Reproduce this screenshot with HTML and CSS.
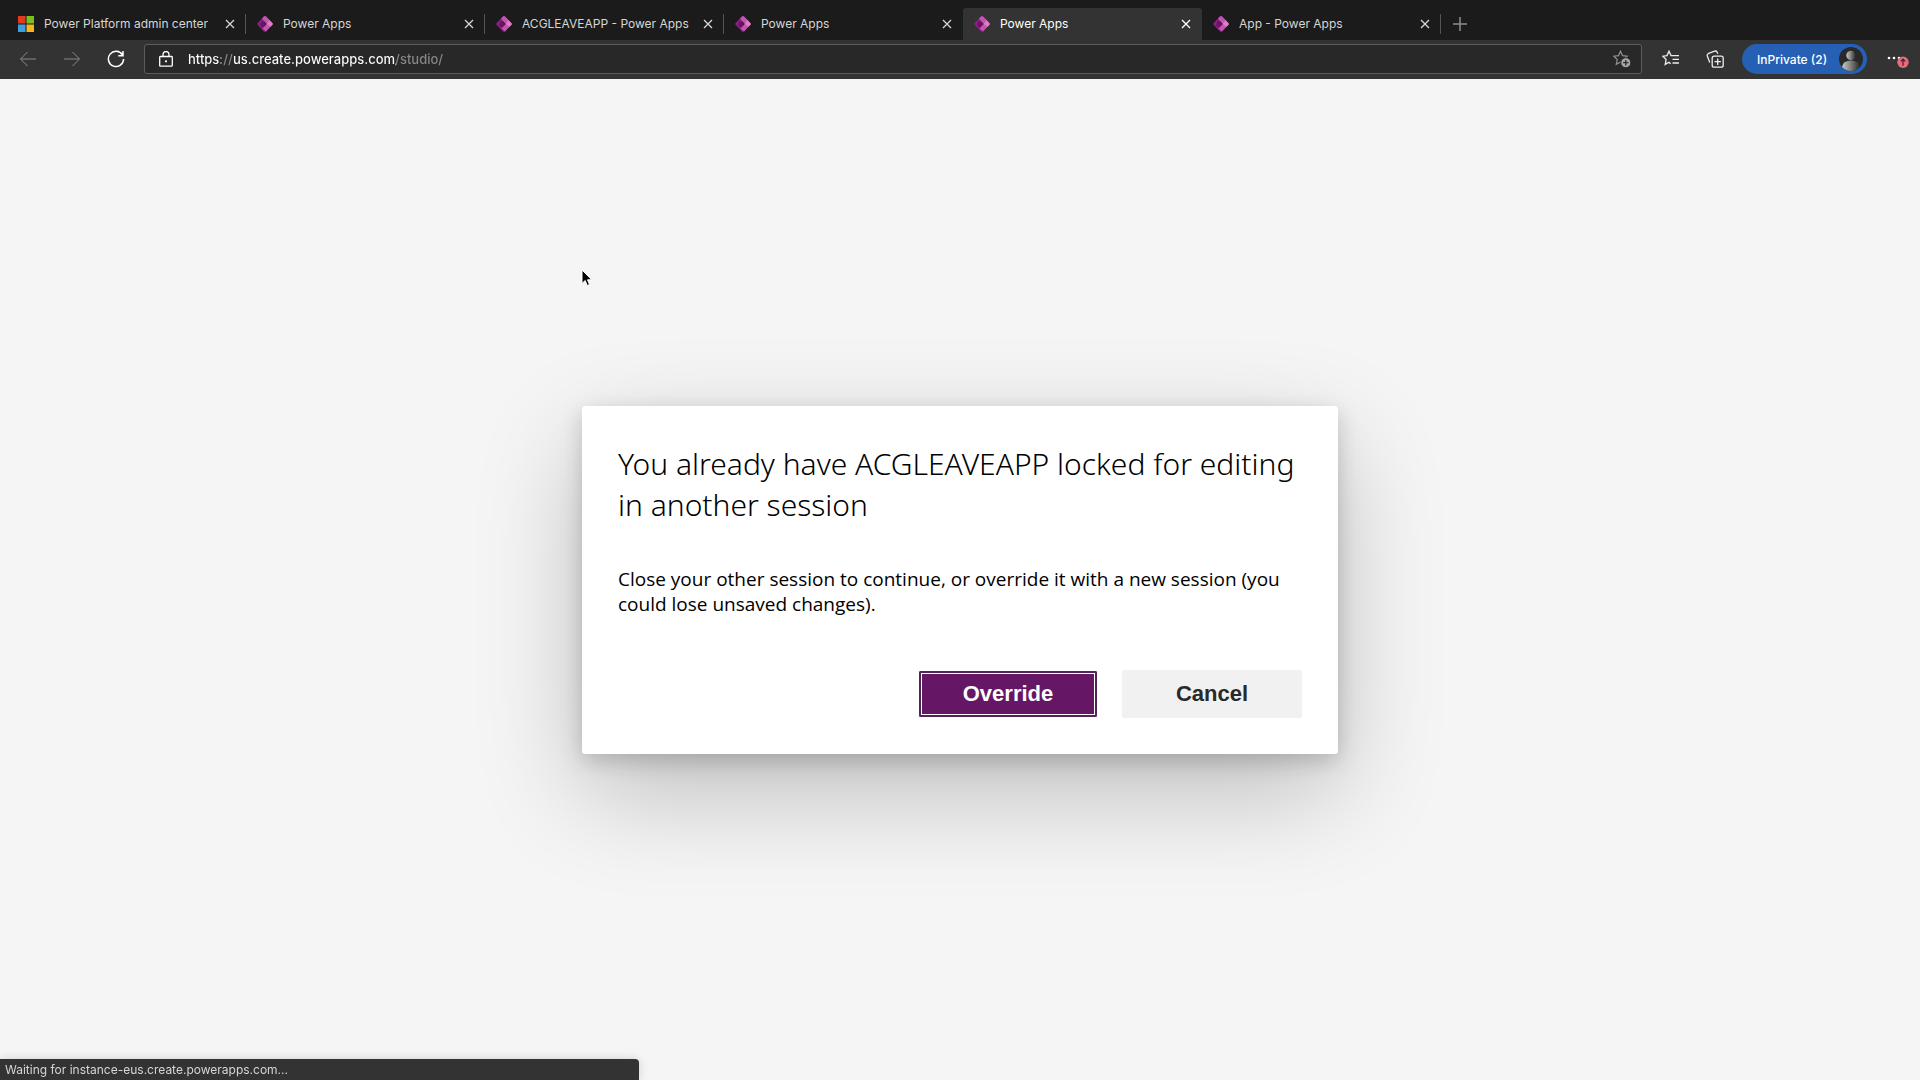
FILE: index.html
```html
<!DOCTYPE html>
<html lang="en">
<head>
<meta charset="utf-8">
<title>Power Apps</title>
<link rel="stylesheet" href="styles.css">
</head>
<body>
<svg class="defs" aria-hidden="true">
  <symbol id="powerapps" viewBox="0 0 16 16">
    <path d="M6.800 0.400 Q8 -0.400 9.200 0.400 L10.500 2 L5.500 8 L10.500 14 L9.200 15.600 Q8 16.400 6.800 15.600 L0.500 8.700 Q0 8 0.500 7.300Z" fill="#8a1f86"/>
    <path d="M5 2.500 L7 0.400 Q8 -0.400 9 0.400 L15.500 7.300 Q16 8 15.500 8.700 L9 15.600 L5.500 12.500 L9.700 8Z" fill="#c255ae"/>
    <path d="M9.500 1 L15.500 7.300 Q16 8 15.500 8.700 L13.500 10.800 L9.700 8 L12.300 4.500Z" fill="#e07cc7"/>
    <path d="M5 4.500 L9.200 8 L5.500 12 L3 9Z" fill="#701169"/>
  </symbol>
  <symbol id="close" viewBox="0 0 10 10">
    <path d="M1 1 9 9M9 1 1 9" stroke="currentColor" stroke-width="1.300" fill="none"/>
  </symbol>
</svg>

<header class="browser">
  <div class="tabs">
    <div class="tab">
      <svg class="tab-icon" viewBox="0 0 16 16"><path fill="#e5391f" d="M0 0h7.500v7.500H0z"/><path fill="#78c01a" d="M8.500 0H16v7.500H8.500z"/><path fill="#3d9fe0" d="M0 8.500h7.500V16H0z"/><path fill="#f5b81c" d="M8.500 8.500H16V16H8.500z"/></svg>
      <span class="tab-title">Power Platform admin center</span>
      <button class="tab-close" aria-label="Close tab"><svg><use href="#close"/></svg></button>
    </div>
    <div class="tab">
      <svg class="tab-icon"><use href="#powerapps"/></svg>
      <span class="tab-title">Power Apps</span>
      <button class="tab-close" aria-label="Close tab"><svg><use href="#close"/></svg></button>
    </div>
    <div class="tab">
      <svg class="tab-icon"><use href="#powerapps"/></svg>
      <span class="tab-title">ACGLEAVEAPP - Power Apps</span>
      <button class="tab-close" aria-label="Close tab"><svg><use href="#close"/></svg></button>
    </div>
    <div class="tab tab-before-active">
      <svg class="tab-icon"><use href="#powerapps"/></svg>
      <span class="tab-title">Power Apps</span>
      <button class="tab-close" aria-label="Close tab"><svg><use href="#close"/></svg></button>
    </div>
    <div class="tab tab-active">
      <svg class="tab-icon"><use href="#powerapps"/></svg>
      <span class="tab-title">Power Apps</span>
      <button class="tab-close" aria-label="Close tab"><svg><use href="#close"/></svg></button>
    </div>
    <div class="tab">
      <svg class="tab-icon"><use href="#powerapps"/></svg>
      <span class="tab-title">App - Power Apps</span>
      <button class="tab-close" aria-label="Close tab"><svg><use href="#close"/></svg></button>
    </div>
    <button class="new-tab" aria-label="New tab"><svg viewBox="0 0 14 14"><path d="M7 0v14M0 7h14" stroke="#8e8e8e" stroke-width="1.500"/></svg></button>
  </div>

  <div class="toolbar">
    <nav class="nav">
      <button class="nav-btn" aria-label="Back" disabled><svg viewBox="0 0 18 18"><path d="M17 9H2M8.500 2 1.500 9l7 7"/></svg></button>
      <button class="nav-btn" aria-label="Forward" disabled><svg viewBox="0 0 18 18"><path d="M1 9h15M9.500 2l7 7-7 7"/></svg></button>
      <button class="nav-btn nav-on" aria-label="Refresh"><svg viewBox="0 0 18 18"><path d="M15.500 5A7.600 7.600 0 1 0 16.600 9M16 1v4.700h-4.700"/></svg></button>
    </nav>
    <div class="address">
      <svg class="lock" viewBox="0 0 14 16"><path d="M1.500 5.500h11q.8 0 .8.800v8q0 .9-.8.900h-11q-.8 0-.8-.9v-8q0-.8.800-.8zM4 5.500V3.500a3 3 0 0 1 6 0v2" fill="none" stroke="#fff" stroke-width="1.300"/><circle cx="7" cy="10.300" r="1.100" fill="#fff"/></svg>
      <input class="url" type="text" aria-label="Address" value="https://us.create.powerapps.com/studio/">
      <button class="icon-btn" aria-label="Add to favorites"><svg class="star" viewBox="0 0 18 18"><path d="M7.500 1.200l2 4.400 4.700.6-3.500 3.300.9 4.800-4.100-2.400-4.200 2.400.9-4.800L.8 6.200l4.700-.6z" fill="none" stroke="#919191" stroke-width="1.200"/><circle cx="12.800" cy="12.700" r="5" fill="#a8a8a8" stroke="#292929"/><path d="M12.800 10v5.400M10.100 12.700h5.400" stroke="#292929" stroke-width="1.300"/></svg></button>
    </div>
    <div class="actions">
      <button class="icon-btn" aria-label="Favorites"><svg viewBox="0 0 18 18"><path d="M11 5.600H9L7 1.200 5 5.600.8 6.200l3.300 3.300-.9 4.900L7 12.200l1.700 1.500M10.500 5.600H17M10.500 9.300H17M10.500 13H17" fill="none" stroke="#ededed" stroke-width="1.300"/></svg></button>
      <button class="icon-btn" aria-label="Collections"><svg viewBox="0 0 18 18"><rect x="6.200" y="6.200" width="11" height="11" rx="2" fill="none" stroke="#ededed" stroke-width="1.300"/><path d="M11.700 8.500v6.400M8.500 11.700h6.400M3.800 12.500 1.300 6Q.8 4.500 2.200 3.700L8.500 1.200q1.800-.6 2.500.8l.8 1.700" fill="none" stroke="#ededed" stroke-width="1.300"/></svg></button>
      <button class="profile">InPrivate (2)
        <svg class="avatar" viewBox="0 0 24 24"><defs><linearGradient id="skin"><stop offset="0" stop-color="#c8c8c8"/><stop offset=".45" stop-color="#858585"/><stop offset="1" stop-color="#292929"/></linearGradient></defs><circle cx="12" cy="12" r="12" fill="#292929"/><circle cx="12" cy="8.500" r="4.700" fill="url(#skin)"/><path d="M3 20q1-6.500 9-6.500t9 6.500q-4 4-9 4t-9-4z" fill="url(#skin)"/></svg>
      </button>
      <button class="more" aria-label="Settings and more, update available"><svg viewBox="0 0 22 18"><g fill="#fff"><circle cx="2" cy="8" r="1.300"/><circle cx="7" cy="8" r="1.300"/><circle cx="12" cy="8" r="1.300"/></g><circle cx="16" cy="12.300" r="5.700" fill="#e26d7b"/><path d="M16 15.800V9.300M13.800 11.300 16 9.100l2.200 2.200" fill="none" stroke="#4a1f26" stroke-width="1.200"/></svg></button>
    </div>
  </div>
</header>

<main class="page">
  <section class="dialog" role="dialog" aria-labelledby="dialog-title">
    <h1 class="dialog-title" id="dialog-title">You already have ACGLEAVEAPP locked for editing in another session</h1>
    <p class="dialog-text">Close your other session to continue, or override it with a new session (you could lose unsaved changes).</p>
    <div class="dialog-actions">
      <button class="btn btn-primary">Override</button>
      <button class="btn">Cancel</button>
    </div>
  </section>
</main>

<div class="status">Waiting for instance-eus.create.powerapps.com...</div>
<svg class="pointer" viewBox="0 0 12 18"><path d="M1 1v13.500l3.200-3 2 5 2.300-1-2-4.700h4.200z" fill="#000" stroke="#fff" stroke-width="1"/></svg>
</body>
</html>
```
FILE: styles.css
```css
* { box-sizing: border-box; }

body {
  margin: 0;
  min-height: 100vh;
  display: flex;
  flex-direction: column;
  background: #f5f5f5;
  font-family: Inter, "Liberation Sans", sans-serif;
  font-size: 12px;
}

button {
  border: 0;
  padding: 0;
  background: none;
  color: inherit;
  font: inherit;
}

.defs { position: absolute; width: 0; height: 0; }

/* Tab strip */
.tabs {
  display: flex;
  height: 40px;
  padding: 8px 7px 0;
  background: #1b1b1b;
  color: #d6d6d6;
}

.tab {
  display: flex;
  align-items: center;
  flex: 0 1 239px;
  min-width: 0;
  padding: 0 11px;
  background: linear-gradient(#555, #555) right 6px / 1px 20px no-repeat;
}

.tab-before-active { background: none; }

.tab-active {
  background: #333;
  border-radius: 3px 3px 0 0;
  color: #fff;
}

.tab-icon { flex: none; width: 16px; height: 16px; }

.tab-title {
  flex: 1;
  margin-left: 10px;
  overflow: hidden;
  white-space: nowrap;
  line-height: 16px;
}

.tab-close { display: flex; }
.tab-close svg { width: 10px; height: 10px; }

.new-tab { display: flex; align-items: center; padding: 0 12px; }
.new-tab svg { width: 14px; height: 14px; }

/* Toolbar */
.toolbar {
  display: flex;
  align-items: center;
  height: 39px;
  padding: 0 11px 1px 19px;
  background: #333;
}

.nav { display: flex; gap: 26px; width: 125px; }
.nav-btn { display: flex; }
.nav-btn svg {
  width: 18px;
  height: 18px;
  fill: none;
  stroke: #8a8a8a;
  stroke-width: 1;
}
.nav-on svg { stroke: #fff; stroke-width: 1.5; }

.address {
  display: flex;
  align-items: center;
  flex: 1;
  height: 30px;
  padding: 0 10px 0 14px;
  border: 1px solid #5c5c5c;
  border-radius: 3px;
  background: #282828;
}

.lock { width: 14px; height: 16px; }

/* The scheme separator and the path are dimmer than the host name. */
.url {
  flex: 1;
  margin-left: 15px;
  padding: 0;
  border: 0;
  outline: 0;
  font: 500 13px/20px Inter, "Liberation Sans", sans-serif;
  color: #fff;
  background: linear-gradient(90deg, #fff 33px, #888 33px 46px, #fff 46px 208px, #888 208px) text;
  -webkit-text-fill-color: transparent;
}

.icon-btn { display: flex; }
.icon-btn svg { width: 18px; height: 18px; }

.actions { display: flex; align-items: center; margin-left: 20px; gap: 26px; }

.profile {
  display: flex;
  align-items: center;
  justify-content: space-between;
  width: 125px;
  height: 30px;
  margin-left: -8px;
  padding: 0 4px 0 15px;
  border-radius: 15px;
  background: #2660b4;
  color: #fff;
  font-weight: 500;
}
.avatar { width: 24px; height: 24px; }

.more { display: flex; margin-left: -6px; }
.more svg { width: 22px; height: 18px; }

/* Page */
.page {
  flex: 1;
  display: flex;
  align-items: center;
  justify-content: center;
}

.dialog {
  width: 756px;
  max-width: 90vw;
  padding: 37px 36px 36px;
  border-radius: 3px;
  background: #fff;
  color: #000;
  font-family: "Open Sans", "Noto Sans", sans-serif;
  box-shadow: 0 38px 104px rgba(0, 0, 0, .23), 0 7px 22px rgba(0, 0, 0, .18);
}

.dialog-title {
  margin: 0;
  font-family: "Noto Sans", "Open Sans", sans-serif;
  font-size: 30px;
  font-weight: 300;
  line-height: 41px;
}

.dialog-text {
  margin: 42px 0 0;
  font-size: 19px;
  line-height: 25px;
}

.dialog-actions {
  display: flex;
  justify-content: flex-end;
  gap: 24px;
  margin-top: 53px;
}

.btn {
  width: 180px;
  height: 48px;
  border-radius: 2px;
  background: #f1f1f1;
  color: #292929;
  font: bold 22px/28px "Liberation Sans", Arial, sans-serif;
}

.btn-primary {
  border: 1px solid #fff;
  background: #651665;
  color: #fff;
  box-shadow: inset 0 0 0 2px #522654, inset 0 0 0 3px #fff;
}

/* Overlays */
.status {
  position: fixed;
  left: 0;
  bottom: 0;
  width: 639px;
  height: 21px;
  padding-left: 5px;
  border-radius: 0 4px 0 0;
  background: #333;
  box-shadow: 0 0 10px rgba(0, 0, 0, .15);
  color: #d6d6d6;
  line-height: 22px;
}

.pointer {
  position: absolute;
  left: 581px;
  top: 269px;
  width: 12px;
  height: 18px;
}
```
